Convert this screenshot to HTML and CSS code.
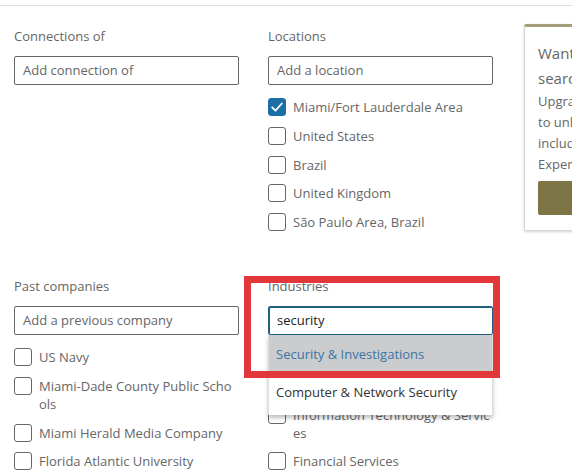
FILE: index.html
```html
<!DOCTYPE html>
<html>
<head>
<meta charset="utf-8">
<link rel="stylesheet" href="styles.css">
</head>
<body>
<div class="topbar"></div>
<div class="page">
  <div class="filters">
    <section class="filter">
      <div class="label">Connections of</div>
      <div class="input placeholder">Add connection of</div>
    </section>
    <section class="filter">
      <div class="label">Locations</div>
      <div class="input placeholder">Add a location</div>
      <ul class="list">
        <li class="row"><span class="box checked"><svg viewBox="0 0 18 18" width="18" height="18"><path d="M4.2 9.3l3.3 3.4 6.3-7.2" fill="none" stroke="#fff" stroke-width="1.8" stroke-linecap="round" stroke-linejoin="round"/></svg></span><span class="text">Miami/Fort Lauderdale Area</span></li>
        <li class="row"><span class="box"></span><span class="text">United States</span></li>
        <li class="row"><span class="box"></span><span class="text">Brazil</span></li>
        <li class="row"><span class="box"></span><span class="text">United Kingdom</span></li>
        <li class="row"><span class="box"></span><span class="text">São Paulo Area, Brazil</span></li>
      </ul>
    </section>
    <section class="filter">
      <div class="label">Past companies</div>
      <div class="input placeholder">Add a previous company</div>
      <ul class="list">
        <li class="row"><span class="box"></span><span class="text">US Navy</span></li>
        <li class="row"><span class="box"></span><span class="text">Miami-Dade County Public Schools</span></li>
        <li class="row"><span class="box"></span><span class="text">Miami Herald Media Company</span></li>
        <li class="row"><span class="box"></span><span class="text">Florida Atlantic University</span></li>
      </ul>
    </section>
    <section class="filter industries">
      <div class="label">Industries</div>
      <div class="input focused">security</div>
      <ul class="list">
        <li class="row"><span class="box"></span><span class="text">Law Practice</span></li>
        <li class="row"><span class="box"></span><span class="text">Military</span></li>
        <li class="row"><span class="box"></span><span class="text">Information Technology &amp; Services</span></li>
        <li class="row"><span class="box"></span><span class="text">Financial Services</span></li>
      </ul>
      <ul class="dropdown">
        <li class="option active">Security &amp; Investigations</li>
        <li class="option">Computer &amp; Network Security</li>
      </ul>
      <div class="highlight"></div>
    </section>
  </div>
  <aside class="card">
    <div class="card-title">Want more advanced<br>search filters?</div>
    <div class="card-text">Upgrade to Sales Navigator<br>to unlock more filters,<br>including Seniority Level,<br>Experience and more</div>
    <div class="card-btn">Try Sales Navigator</div>
  </aside>
</div>
</body>
</html>
```

FILE: styles.css
```css
* { box-sizing: border-box; }
html, body { margin: 0; padding: 0; }
body {
  width: 572px;
  height: 473px;
  overflow: hidden;
  background: #fff;
  font-family: "Open Sans", "Noto Sans", sans-serif;
  font-size: 13px;
  color: #666;
}
.topbar {
  height: 6px;
  border-bottom: 1px solid #dedede;
}
.page {
  display: flex;
  align-items: flex-start;
  padding: 20px 0 0 14px;
}
.filters {
  display: grid;
  grid-template-columns: 225px 225px;
  column-gap: 29px;
  row-gap: 34px;
  flex: none;
}
.filter { position: relative; }
.label {
  line-height: 20px;
  margin-bottom: 10px;
  color: #666;
}
.input {
  height: 29px;
  border: 1px solid #666;
  border-radius: 2px;
  padding: 0 8px;
  line-height: 27px;
  font-size: 13px;
}
.placeholder { color: #666; }
.focused {
  color: #222;
  border-color: #1f5f80;
  box-shadow: inset 1px 1px 0 0 #1f5f80;
}
.list {
  list-style: none;
  margin: 13px 0 0;
  padding: 0;
}
.row {
  display: flex;
  gap: 7px;
  line-height: 18px;
  margin-bottom: 10.8px;
  font-size: 13px;
}
.box {
  flex: none;
  width: 18px;
  height: 18px;
  border: 1px solid #666;
  border-radius: 3px;
  background: #fff;
}
.box.checked {
  background: #1b6ea6;
  border-color: #1b6ea6;
  position: relative;
}
.box.checked svg { display: block; margin: -1px; }
.text {
  color: #666;
  word-break: break-all;
  width: 200px;
}
.dropdown {
  position: absolute;
  left: 0;
  top: 59px;
  width: 225px;
  margin: 0;
  padding: 0;
  list-style: none;
  background: #fff;
  border-left: 1px solid #ddd;
  border-right: 1px solid #ddd;
  box-shadow: 0 3px 4px rgba(0,0,0,0.25);
}
.option {
  height: 39px;
  line-height: 39px;
  padding: 0 7px;
  color: #333;
  font-size: 13px;
}
.option + .option {
  height: 41px;
  line-height: 37px;
}
.option.active {
  background: #cacccd;
  color: #3c74a6;
}
.highlight {
  position: absolute;
  left: -24px;
  top: 0;
  width: 256px;
  height: 102px;
  border: 7px solid #e2383b;
}
.card {
  flex: none;
  margin: -2px 0 0 31px;
  width: 240px;
  border: 1px solid #d6d6d6;
  border-top: 3px solid #a69e78;
  border-radius: 2px;
  box-shadow: 0 1px 3px rgba(0,0,0,0.18);
  padding: 14px 14px 15px 13px;
  white-space: nowrap;
  background: #fff;
}
.card-title {
  font-size: 15px;
  line-height: 25px;
  color: #666;
  margin-bottom: 0;
}
.card-text {
  font-size: 13px;
  line-height: 21px;
  color: #666;
}
.card-btn {
  margin-top: 6px;
  height: 34px;
  background: #7e7546;
  border-radius: 2px;
  color: #7e7546;
  line-height: 34px;
  padding: 0 14px;
  font-size: 14px;
}
```
